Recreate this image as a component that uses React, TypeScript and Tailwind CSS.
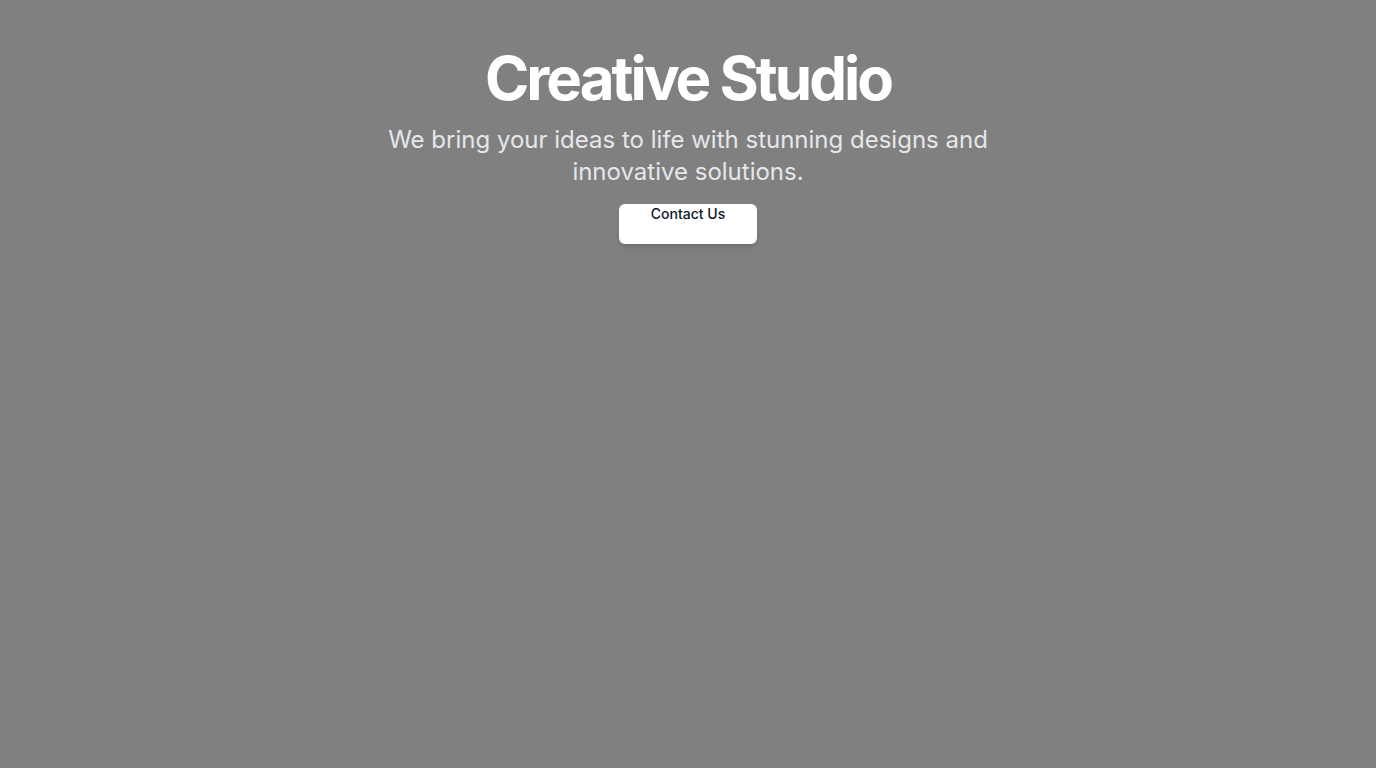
import React from "react";

export default function App() {
  return (
    <div
      className="min-h-screen w-full bg-[#808080] flex flex-col items-center pt-12 gap-4"
      style={{ fontFamily: "Inter, 'Noto Sans', sans-serif" }}
    >
      <h1 className="text-6xl leading-none font-bold tracking-tighter text-white">Creative Studio</h1>
      <p className="text-2xl leading-8 text-gray-200 text-center max-w-2xl">
        We bring your ideas to life with stunning designs and innovative solutions.
      </p>
      <button className="h-10 px-8 bg-white rounded-md shadow-md text-sm leading-5 font-medium text-gray-900 flex items-start justify-center">
        Contact Us
      </button>
    </div>
  );
}
